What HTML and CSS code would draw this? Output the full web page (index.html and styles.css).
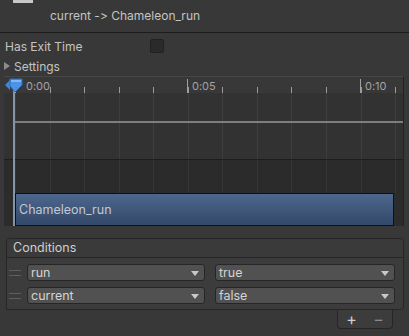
FILE: index.html
```html
<!DOCTYPE html>
<html lang="en">
<head>
  <meta charset="UTF-8" />
  <title>Transition Inspector</title>
  <link rel="stylesheet" href="styles.css">
</head>
<body>
  <div class="inspector">
    <div class="header">
      <div class="header-icon"></div>
      <div class="title">current -&gt; Chameleon_run</div>
    </div>

    <div class="prop-row exit-time">
      <span class="prop-label">Has Exit Time</span>
      <span class="checkbox"></span>
    </div>
    <div class="prop-row foldout">
      <span class="fold-arrow"></span>
      <span>Settings</span>
    </div>

    <div class="timeline">
      <div class="ruler">
        <span class="ruler-label" style="left: 18px">0:00</span>
        <span class="ruler-label major" style="left: 183px">0:05</span>
        <span class="ruler-label major" style="left: 356px">0:10</span>
      </div>
      <div class="track">
        <div class="curve"></div>
      </div>
      <div class="band"></div>
      <div class="clip-row">
        <div class="clip">Chameleon_run</div>
      </div>
      <div class="playhead-line"></div>
      <svg class="playhead" width="20" height="15" viewBox="0 0 20 15">
        <polygon points="1,7 6,2 6,12" fill="#3f86d8" />
        <polygon points="6,1 18,1 18,7 11,14 6,8" fill="#4a93e6" stroke="#2f6fbf" stroke-width="1" />
        <rect x="7" y="2" width="10" height="2" fill="#80b8f2" />
      </svg>
    </div>

    <div class="conditions">
      <div class="conditions-head">Conditions</div>
      <div class="conditions-body">
        <div class="cond-row">
          <span class="handle"></span>
          <div class="dropdown param">run</div>
          <div class="dropdown value">true</div>
        </div>
        <div class="cond-row">
          <span class="handle"></span>
          <div class="dropdown param">current</div>
          <div class="dropdown value">false</div>
        </div>
      </div>
    </div>
    <div class="footer">
      <span class="footer-btn">+</span>
      <span class="footer-btn dim">−</span>
    </div>
  </div>
</body>
</html>
```

FILE: styles.css
```css
body { margin: 0; background: #383838; font-family: Inter, "Noto Sans", sans-serif; font-size: 12px; color: #c4c4c4; font-variant-ligatures: none; font-feature-settings: "calt" 0; }
.inspector { width: 409px; height: 336px; overflow: hidden; }

.header { height: 32px; border-bottom: 1px solid #1c1c1c; }
.header-icon { width: 20px; height: 3px; margin-left: 13px; background: #c8c8c8; }
.title { margin: 6px 0 0 50px; line-height: 14px; }

.prop-row { display: flex; align-items: center; height: 18px; padding-left: 5px; }
.exit-time { margin-top: 4px; }
.prop-label { width: 145px; }
.checkbox { width: 12px; height: 12px; background: #2a2a2a; border: 1px solid #212121; border-radius: 2px; }
.foldout { margin-top: 2px; padding-left: 4px; gap: 4px; }
.fold-arrow { width: 0; height: 0; border-top: 4px solid transparent; border-bottom: 4px solid transparent; border-left: 6px solid #8c8c8c; }

.timeline { position: relative; margin: 1px 0 0 4px; width: 400px; border-top: 1px solid #464646; border-right: 1px solid #232323; box-sizing: border-box; }
.ruler { position: relative; height: 16px; background-color: #383838;
  background-image: repeating-linear-gradient(to right, #9a9a9a 0 1px, transparent 1px 34.56px);
  background-size: 100% 6px; background-position: 11px 10px; background-repeat: repeat-x; }
.ruler-label { position: absolute; top: 2px; padding-left: 4px; font-size: 11px; line-height: 14px; color: #a3a3a3; }
.ruler-label.major { border-left: 1px solid #a0a0a0; }

.track { height: 66px; padding-top: 28px; box-sizing: border-box; background-color: #323232;
  background-image: repeating-linear-gradient(to right, #3e3e3e 0 1px, transparent 1px 34.56px);
  background-position: 11px 0; }
.curve { margin-left: 11px; height: 2px; background: #7e7e7e; }

.band { height: 34px; background-color: #2b2b2b; border-top: 1px solid #1e1e1e; box-sizing: border-box;
  background-image: repeating-linear-gradient(to right, #363636 0 1px, transparent 1px 34.56px);
  background-position: 11px 0; }

.clip-row { height: 33px; background: #2c2c2c; padding-left: 11px; }
.clip { width: 379px; height: 33px; box-sizing: border-box; border: 1px solid #111; padding-left: 3px;
  background: linear-gradient(#4d678c, #33486a); color: #c2c8d2; font-size: 12.5px; line-height: 31px; }

.playhead-line { position: absolute; left: 9px; top: 12px; bottom: 0; width: 2px; background: #8793a6; }
.playhead { position: absolute; left: 0; top: 1px; }

.conditions { margin: 12px 0 0 6px; width: 396px; border: 1px solid #262626; border-radius: 4px 4px 4px 0; background: #3c3c3c; }
.conditions-head { height: 18px; line-height: 18px; padding-left: 6px; background: #3a3a3a; border-bottom: 1px solid #262626; border-radius: 4px 4px 0 0; color: #cfcfcf; font-size: 12.5px; }
.conditions-body { display: flex; flex-direction: column; gap: 6px; padding: 6px 6px 5px 2px; }
.cond-row { display: flex; align-items: center; }
.handle { width: 12px; height: 4px; margin-right: 6px; border-top: 1px solid #5e5e5e; border-bottom: 1px solid #5e5e5e; }
.dropdown { position: relative; height: 17px; box-sizing: border-box; border: 1px solid #262626; border-radius: 3px;
  background: #515151; color: #d4d4d4; padding-left: 3px; line-height: 15px; font-size: 12.5px; }
.dropdown::after { content: ""; position: absolute; right: 5px; top: 6px; border-left: 4px solid transparent; border-right: 4px solid transparent; border-top: 5px solid #c8c8c8; }
.param { width: 178px; }
.value { width: 180px; margin-left: 10px; }

.footer { display: flex; justify-content: space-around; align-items: center; margin-left: 337px; width: 56px; height: 19px; box-sizing: border-box;
  background: #3c3c3c; border: 1px solid #262626; border-top: none; border-radius: 0 0 4px 4px; }
.footer-btn { font-size: 16px; line-height: 16px; color: #d0d0d0; }
.footer-btn.dim { color: #8a8a8a; }
```
